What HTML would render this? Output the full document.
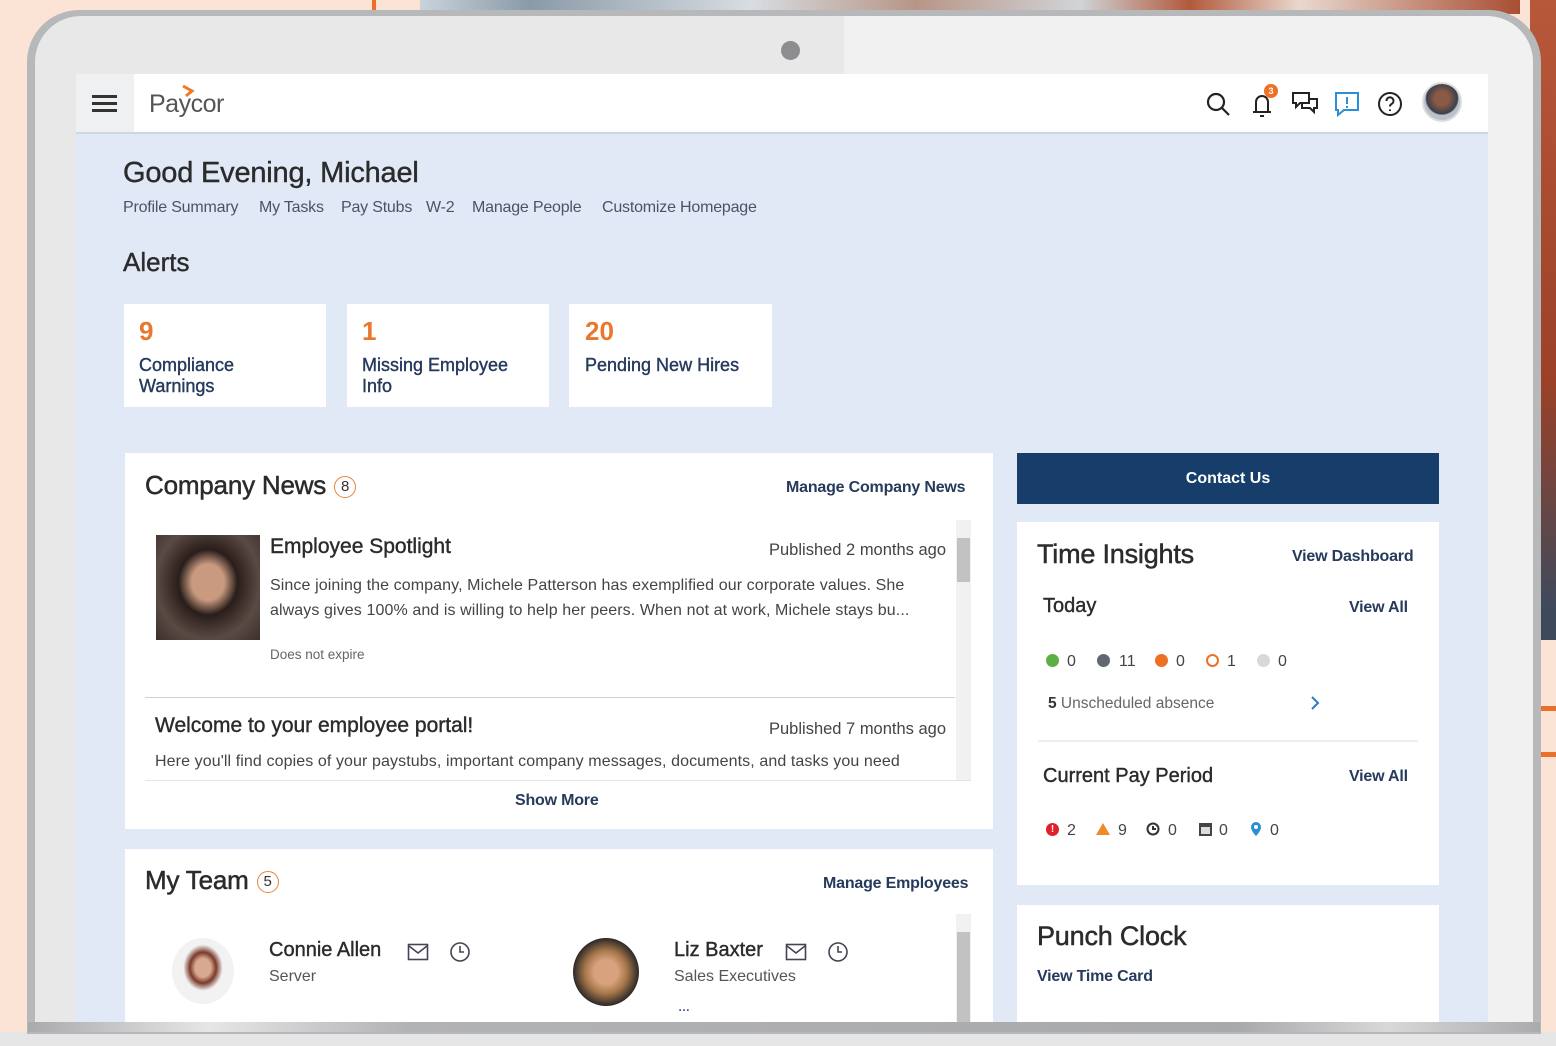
<!DOCTYPE html>
<html><head><meta charset="utf-8"><style>
*{margin:0;padding:0;box-sizing:border-box}
body{width:1556px;height:1046px;overflow:hidden;position:relative;background:#fbe3d6;font-family:"Liberation Sans",sans-serif;color:#2b2b2b}
.a{position:absolute;white-space:nowrap}
.card{position:absolute;background:#fff}
.nav{color:#4a5466;font-size:16px;letter-spacing:-0.2px}
.lnk{color:#263a5c;font-weight:bold;font-size:16px;letter-spacing:-0.2px}
.t{font-size:26px;letter-spacing:-0.2px;color:#2b2b2b;-webkit-text-stroke:.5px #2b2b2b}
.s{-webkit-text-stroke:.4px currentColor}
.badge{display:inline-block;width:22px;height:22px;border:1.5px solid #e8833a;border-radius:50%;font-size:15px;text-align:center;line-height:19px;vertical-align:3px;margin-left:8px;color:#333;-webkit-text-stroke:0}
.dot{position:absolute;width:13px;height:13px;border-radius:50%}
.num{position:absolute;font-size:16px;color:#444}
</style></head><body>
<div class="a" style="left:420px;top:0;width:1100px;height:14px;background:linear-gradient(90deg,#c9d3dc,#8a9aa8 10%,#d7dde2 30%,#b89586 45%,#d0d4d8 60%,#b15a3c 70%,#e9d8cf 80%,#a84e33)"></div>
<div class="a" style="left:372px;top:0;width:4px;height:12px;background:#e8702a"></div>
<div class="a" style="left:1530px;top:0;width:26px;height:640px;background:linear-gradient(180deg,#b8583a,#9a4128 60%,#3e4a5c 95%)"></div>
<div class="a" style="left:1538px;top:706px;width:18px;height:5px;background:#e8702a"></div>
<div class="a" style="left:1538px;top:752px;width:18px;height:5px;background:#e8702a"></div>
<div class="a" style="left:0;top:1032px;width:1556px;height:14px;background:#e6e6e6"></div>
<div class="a" style="left:27px;top:10px;width:1514px;height:1024px;background:#b7b8ba;border-radius:52px 52px 0 0"></div>
<div class="a" style="left:35px;top:16px;width:1498px;height:1010px;background:linear-gradient(90deg,#e8e8e9 54%,#f1f1f2 54%);border-radius:46px 46px 0 0"></div>
<div class="a" style="left:781px;top:41px;width:19px;height:19px;border-radius:50%;background:#8d8d8f"></div>
<div class="a" style="left:28px;top:1022px;width:1512px;height:10px;background:linear-gradient(90deg,#a9aaac,#e6e6e7 12%,#b2b3b5 25%,#a8a9ab 80%,#d8d8d9 90%,#a9aaac)"></div>
<div class="a" style="left:76px;top:74px;width:1412px;height:948px;background:#e0e9f5;overflow:hidden">
 <div class="a" style="left:0;top:0;width:1412px;height:60px;background:#fff;border-bottom:2px solid #cfd6df"></div>
 <div class="a" style="left:0;top:0;width:58px;height:58px;background:#eef0f2"></div>
 <div class="a" style="left:16px;top:21px;width:25px;height:3px;background:#333;box-shadow:0 7px 0 #333,0 14px 0 #333"></div>
 <div class="a" style="left:73px;top:16px;font-size:25px;color:#555;letter-spacing:-0.5px">Paycor</div>
 <svg class="a" style="left:104px;top:10px" width="20" height="14"><path d="M3 2 L12 7 L6 12" stroke="#f07a22" stroke-width="3" fill="none"/></svg>
 <svg class="a" style="left:1128px;top:16px" width="30" height="30" fill="none" stroke="#222" stroke-width="2.2"><circle cx="12" cy="12" r="8"/><path d="M18 18l7 7"/></svg>
 <svg class="a" style="left:1172px;top:12px" width="30" height="34" fill="none" stroke="#222" stroke-width="2"><path d="M5 26h18M8 26V16a6 6 0 0 1 12 0v10M12 30h4"/></svg>
 <div class="a" style="left:1188px;top:10px;width:14px;height:14px;border-radius:50%;background:#ee7023;color:#fff;font-size:9px;text-align:center;line-height:14px;font-weight:bold">3</div>
 <svg class="a" style="left:1214px;top:16px" width="30" height="30" fill="none" stroke="#222" stroke-width="2"><path d="M3 3h16v10h-9l-4 4v-4H3z"/><path d="M12 13v5h8l4 4v-4h3v-9h-7"/></svg>
 <svg class="a" style="left:1257px;top:16px" width="30" height="30" fill="none" stroke="#2b8fd6" stroke-width="2"><path d="M3 3h22v17H11l-6 5v-5H3z"/><path d="M14 7v7M14 16v2"/></svg>
 <svg class="a" style="left:1300px;top:16px" width="30" height="30" fill="none" stroke="#222" stroke-width="2"><circle cx="14" cy="14" r="11"/><path d="M10.5 11a3.5 3.5 0 1 1 5 3c-1.2.6-1.5 1.3-1.5 2.5M14 19.5v1.5"/></svg>
 <div class="a" style="left:1346px;top:8px;width:40px;height:40px;border-radius:50%;background:radial-gradient(circle at 50% 40%,#8a5a46 25%,#3a3f4c 55%,#b9c1c9 60%);border:2px solid #ddd"></div>
 <div class="a s" style="left:47px;top:83px;font-size:29px;color:#2b2b2b;letter-spacing:-0.2px">Good Evening, Michael</div>
 <div class="a nav" style="left:47px;top:125px">Profile Summary</div>
 <div class="a nav" style="left:183px;top:125px">My Tasks</div>
 <div class="a nav" style="left:265px;top:125px">Pay Stubs</div>
 <div class="a nav" style="left:350px;top:125px">W-2</div>
 <div class="a nav" style="left:396px;top:125px">Manage People</div>
 <div class="a nav" style="left:526px;top:125px">Customize Homepage</div>
 <div class="a s" style="left:47px;top:173px;font-size:26px;color:#2b2b2b">Alerts</div>
 <div class="card" style="left:48px;top:230px;width:202px;height:103px"></div>
 <div class="card" style="left:271px;top:230px;width:202px;height:103px"></div>
 <div class="card" style="left:493px;top:230px;width:203px;height:103px"></div>
 <div class="a" style="left:63px;top:242px;font-size:26px;color:#e8782e;font-weight:bold">9</div>
 <div class="a" style="left:286px;top:242px;font-size:26px;color:#e8782e;font-weight:bold">1</div>
 <div class="a" style="left:509px;top:242px;font-size:26px;color:#e8782e;font-weight:bold">20</div>
 <div class="a s" style="left:63px;top:281px;font-size:18px;line-height:21px;color:#253a5e">Compliance<br>Warnings</div>
 <div class="a s" style="left:286px;top:281px;font-size:18px;line-height:21px;color:#253a5e">Missing Employee<br>Info</div>
 <div class="a s" style="left:509px;top:281px;font-size:18px;line-height:21px;color:#253a5e">Pending New Hires</div>
 <div class="card" style="left:49px;top:379px;width:868px;height:376px"></div>
 <div class="a t" style="left:69px;top:396px">Company News<span class="badge">8</span></div>
 <div class="a lnk" style="left:710px;top:405px">Manage Company News</div>
 <div class="a" style="left:880px;top:446px;width:15px;height:260px;background:#f1f1f1"></div>
 <div class="a" style="left:881px;top:464px;width:13px;height:44px;background:#c2c2c2"></div>
 <div class="a" style="left:80px;top:461px;width:104px;height:105px;background:radial-gradient(ellipse at 50% 45%,#c99a80 22%,#2a1e1a 40%,#5a4a44 70%,#3a302c)"></div>
 <div class="a s" style="left:194px;top:461px;font-size:21px;color:#2b2b2b">Employee Spotlight</div>
 <div class="a" style="left:693px;top:467px;font-size:16.5px;color:#444">Published 2 months ago</div>
 <div class="a" style="left:194px;top:499px;font-size:16px;color:#444;line-height:25px;letter-spacing:0.1px">Since joining the company, Michele Patterson has exemplified our corporate values. She<br>always gives 100% and is willing to help her peers. When not at work, Michele stays bu...</div>
 <div class="a" style="left:194px;top:573px;font-size:13.5px;color:#666">Does not expire</div>
 <div class="a" style="left:69px;top:623px;width:810px;height:1px;background:#cfcfcf"></div>
 <div class="a s" style="left:79px;top:640px;font-size:21px;color:#2b2b2b">Welcome to your employee portal!</div>
 <div class="a" style="left:693px;top:646px;font-size:16.5px;color:#444">Published 7 months ago</div>
 <div class="a" style="left:79px;top:679px;font-size:16px;color:#444;letter-spacing:0.1px">Here you'll find copies of your paystubs, important company messages, documents, and tasks you need</div>
 <div class="a" style="left:69px;top:706px;width:826px;height:1px;background:#e4e4e4"></div>
 <div class="a lnk" style="left:439px;top:718px">Show More</div>
 <div class="card" style="left:49px;top:775px;width:868px;height:200px"></div>
 <div class="a t" style="left:69px;top:791px">My Team<span class="badge">5</span></div>
 <div class="a lnk" style="left:747px;top:801px">Manage Employees</div>
 <div class="a" style="left:880px;top:840px;width:15px;height:120px;background:#f1f1f1"></div>
 <div class="a" style="left:881px;top:858px;width:13px;height:100px;background:#c2c2c2"></div>
 <div class="a" style="left:96px;top:864px;width:62px;height:66px;border-radius:50%;background:radial-gradient(ellipse at 50% 45%,#d9a890 18%,#7a3a2a 30%,#f2f2f2 45%)"></div>
 <div class="a" style="left:497px;top:864px;width:66px;height:68px;border-radius:50%;background:radial-gradient(ellipse at 50% 50%,#d9a27e 25%,#a7774a 45%,#2e2a28 70%)"></div>
 <div class="a s" style="left:193px;top:865px;font-size:20px;color:#2b2b2b">Connie Allen</div>
 <div class="a" style="left:193px;top:894px;font-size:16px;color:#555">Server</div>
 <div class="a s" style="left:598px;top:865px;font-size:20px;color:#2b2b2b">Liz Baxter</div>
 <div class="a" style="left:598px;top:894px;font-size:16px;color:#555">Sales Executives</div>
 <svg class="a" style="left:331px;top:869px" width="22" height="18" fill="none" stroke="#445" stroke-width="1.6"><rect x="1.5" y="1.5" width="19" height="15"/><path d="M2 3l9 7 9-7"/></svg>
 <svg class="a" style="left:373px;top:867px" width="22" height="22" fill="none" stroke="#445" stroke-width="1.6"><circle cx="11" cy="11" r="9"/><path d="M11 5v6h4"/></svg>
 <svg class="a" style="left:709px;top:869px" width="22" height="18" fill="none" stroke="#445" stroke-width="1.6"><rect x="1.5" y="1.5" width="19" height="15"/><path d="M2 3l9 7 9-7"/></svg>
 <svg class="a" style="left:751px;top:867px" width="22" height="22" fill="none" stroke="#445" stroke-width="1.6"><circle cx="11" cy="11" r="9"/><path d="M11 5v6h4"/></svg>
 <div class="a" style="left:602px;top:926px;font-size:12px;color:#3a5a8a;font-weight:bold">&#8230;</div>
 <div class="a" style="left:941px;top:379px;width:422px;height:51px;background:#173e6b;color:#fff;font-weight:bold;font-size:16px;text-align:center;line-height:51px">Contact Us</div>
 <div class="card" style="left:941px;top:448px;width:422px;height:363px"></div>
 <div class="a t" style="left:961px;top:465px;font-size:27px">Time Insights</div>
 <div class="a lnk" style="left:1216px;top:474px">View Dashboard</div>
 <div class="a s" style="left:967px;top:521px;font-size:20px;color:#2b2b2b">Today</div>
 <div class="a lnk" style="left:1273px;top:525px">View All</div>
 <div class="dot" style="left:970px;top:580px;background:#5cb043"></div><div class="num" style="left:991px;top:579px">0</div>
 <div class="dot" style="left:1021px;top:580px;background:#636870"></div><div class="num" style="left:1043px;top:579px">11</div>
 <div class="dot" style="left:1079px;top:580px;background:#ee7023"></div><div class="num" style="left:1100px;top:579px">0</div>
 <div class="dot" style="left:1130px;top:580px;border:2px solid #ee7023"></div><div class="num" style="left:1151px;top:579px">1</div>
 <div class="dot" style="left:1181px;top:580px;background:#d8d8d8"></div><div class="num" style="left:1202px;top:579px">0</div>
 <div class="a" style="left:972px;top:621px;font-size:15.5px;color:#666"><b style="color:#333">5</b> Unscheduled absence</div>
 <svg class="a" style="left:1232px;top:620px" width="14" height="18" fill="none" stroke="#2b7cc4" stroke-width="2"><path d="M4 3l6 6-6 6"/></svg>
 <div class="a" style="left:962px;top:666px;width:380px;height:2px;background:#eceef0"></div>
 <div class="a s" style="left:967px;top:691px;font-size:20px;color:#2b2b2b">Current Pay Period</div>
 <div class="a lnk" style="left:1273px;top:694px">View All</div>
 <div class="dot" style="left:970px;top:749px;background:#e0202a;color:#fff;font-size:10px;text-align:center;line-height:13px;font-weight:bold">!</div><div class="num" style="left:991px;top:748px">2</div>
 <svg class="a" style="left:1019px;top:748px" width="16" height="14"><path d="M8 1l7 12H1z" fill="#ee8a2a"/></svg><div class="num" style="left:1042px;top:748px">9</div>
 <svg class="a" style="left:1070px;top:748px" width="16" height="16" fill="none" stroke="#333" stroke-width="2"><circle cx="7" cy="7" r="5.5"/><path d="M7 4v3h3"/></svg><div class="num" style="left:1092px;top:748px">0</div>
 <svg class="a" style="left:1122px;top:748px" width="15" height="15"><rect x="1" y="1" width="13" height="13" fill="#444"/><rect x="3" y="5" width="9" height="7" fill="#ddd"/></svg><div class="num" style="left:1143px;top:748px">0</div>
 <svg class="a" style="left:1174px;top:747px" width="12" height="16"><path d="M6 1a5 5 0 0 1 5 5c0 4-5 9-5 9S1 10 1 6a5 5 0 0 1 5-5z" fill="#2b8fd6"/><circle cx="6" cy="6" r="2" fill="#fff"/></svg><div class="num" style="left:1194px;top:748px">0</div>
 <div class="card" style="left:941px;top:831px;width:422px;height:150px"></div>
 <div class="a t" style="left:961px;top:847px;font-size:27px">Punch Clock</div>
 <div class="a lnk" style="left:961px;top:894px">View Time Card</div>
</div>
</body></html>
